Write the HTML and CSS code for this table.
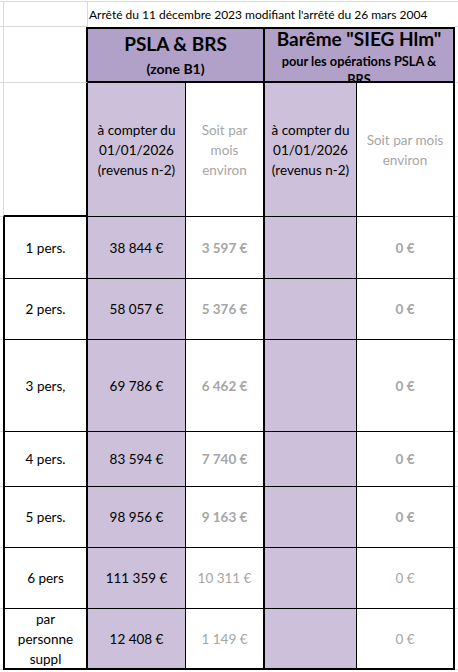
FILE: index.html
```html
<!DOCTYPE html>
<html lang="fr">
<head>
<meta charset="utf-8">
<link rel="stylesheet" href="styles.css">
<title>Barème PSLA &amp; BRS</title>
</head>
<body>
<div class="sheet">
  <div class="strip"></div>

  <div class="m"></div>
  <div class="ga"></div>
  <div class="title">Arrêté du 11 décembre 2023 modifiant l'arrêté du 26 mars 2004</div>
  <div class="m"></div>

  <div class="m"></div>
  <div class="ha"></div>
  <div class="h h1"><div class="big">PSLA &amp; BRS</div><div class="sub">(zone B1)</div></div>
  <div class="h h2"><div class="big">Barême "SIEG Hlm"</div><div class="sub2">pour les opérations PSLA &amp;<br>BRS</div></div>
  <div class="m"></div>

  <div class="m"></div>
  <div class="r3a"></div>
  <div class="c p b1">à compter du<br>01/01/2026<br>(revenus n-2)</div>
  <div class="c b2 g">Soit par<br>mois<br>environ</div>
  <div class="c p b1">à compter du<br>01/01/2026<br>(revenus n-2)</div>
  <div class="c b2 g">Soit par mois<br>environ</div>
  <div class="m"></div>

  <div class="m"></div>
  <div class="c lab">1 pers.</div>
  <div class="c p b1">38 844 €</div>
  <div class="c b2 g bold">3 597 €</div>
  <div class="c p b1"></div>
  <div class="c b2 g bold">0 €</div>
  <div class="m"></div>

  <div class="m"></div>
  <div class="c lab">2 pers.</div>
  <div class="c p b1">58 057 €</div>
  <div class="c b2 g bold">5 376 €</div>
  <div class="c p b1"></div>
  <div class="c b2 g bold">0 €</div>
  <div class="m"></div>

  <div class="m"></div>
  <div class="c lab">3 pers,</div>
  <div class="c p b1">69 786 €</div>
  <div class="c b2 g bold">6 462 €</div>
  <div class="c p b1"></div>
  <div class="c b2 g bold">0 €</div>
  <div class="m"></div>

  <div class="m"></div>
  <div class="c lab">4 pers.</div>
  <div class="c p b1">83 594 €</div>
  <div class="c b2 g bold">7 740 €</div>
  <div class="c p b1"></div>
  <div class="c b2 g bold">0 €</div>
  <div class="m"></div>

  <div class="m"></div>
  <div class="c lab">5 pers.</div>
  <div class="c p b1">98 956 €</div>
  <div class="c b2 g bold">9 163 €</div>
  <div class="c p b1"></div>
  <div class="c b2 g bold">0 €</div>
  <div class="m"></div>

  <div class="m"></div>
  <div class="c lab">6 pers</div>
  <div class="c p b1">111 359 €</div>
  <div class="c b2 g">10 311 €</div>
  <div class="c p b1"></div>
  <div class="c b2 g">0 €</div>
  <div class="m"></div>

  <div class="m"></div>
  <div class="c lab end">par<br>personne<br>suppl</div>
  <div class="c p b1 end">12 408 €</div>
  <div class="c b2 g end">1 149 €</div>
  <div class="c p b1 end"></div>
  <div class="c b2 g end">0 €</div>
  <div class="m"></div>

  <div class="strip2"></div>
</div>
</body>
</html>
```

FILE: styles.css
```css
html, body {
  margin: 0;
  padding: 0;
  background: #ffffff;
}

body {
  font-family: Lato, "Open Sans", "DejaVu Sans", sans-serif;
  color: #000;
}

.sheet {
  display: grid;
  width: 458px;
  height: 672px;
  grid-template-columns: 3px 85px 98px 79px 92px 98px 3px;
  grid-template-rows: 2px 25px 56px 134px 62px 61px 92px 55px 61px 61px 61px 2px;
}

.sheet > div {
  box-sizing: border-box;
  min-width: 0;
}

.strip {
  grid-column: 1 / -1;
  border-bottom: 1px solid #dadada;
}

.strip2 {
  grid-column: 1 / -1;
}

.m {
  border-bottom: 1px solid #dadada;
}

.ga {
  border-left: 1px solid #dadada;
  border-right: 1px solid #dadada;
  border-bottom: 1px solid #dadada;
}

.title {
  grid-column: span 4;
  font-size: 12px;
  padding-left: 1px;
  padding-top: 5px;
  line-height: 16px;
  white-space: nowrap;
}

.ha {
  border-left: 1px solid #dadada;
  border-bottom: 1px solid #dadada;
  border-right: 2px solid #000;
}

.h {
  grid-column: span 2;
  background: #b1a0c7;
  border-top: 2px solid #000;
  border-right: 2px solid #000;
  border-bottom: 2px solid #000;
  text-align: center;
  font-weight: bold;
  overflow: hidden;
}

.h1 {
  padding-top: 2px;
}

.h1 .big {
  font-size: 19px;
  line-height: 26px;
}

.h1 .sub {
  font-size: 14px;
  line-height: 24px;
}

.h2 .big {
  font-size: 19px;
  line-height: 20px;
  padding-top: 0;
}

.h2 .sub2 {
  font-size: 12.8px;
  line-height: 18px;
  padding-top: 3px;
}

.r3a {
  border-left: 1px solid #dadada;
  border-right: 2px solid #000;
  border-bottom: 2px solid #000;
}

.c {
  display: flex;
  align-items: center;
  justify-content: center;
  text-align: center;
  font-size: 13.5px;
  line-height: 20px;
  border-bottom: 1px solid #000;
}

.p {
  background: #ccc0da;
}

.b1 {
  border-right: 1px solid #000;
}

.b2 {
  border-right: 2px solid #000;
}

.g {
  color: #a6a6a6;
}

.bold {
  font-weight: bold;
}

.lab {
  border-left: 2px solid #000;
  border-right: 2px solid #000;
}

.end {
  border-bottom: 2px solid #000;
}
```
